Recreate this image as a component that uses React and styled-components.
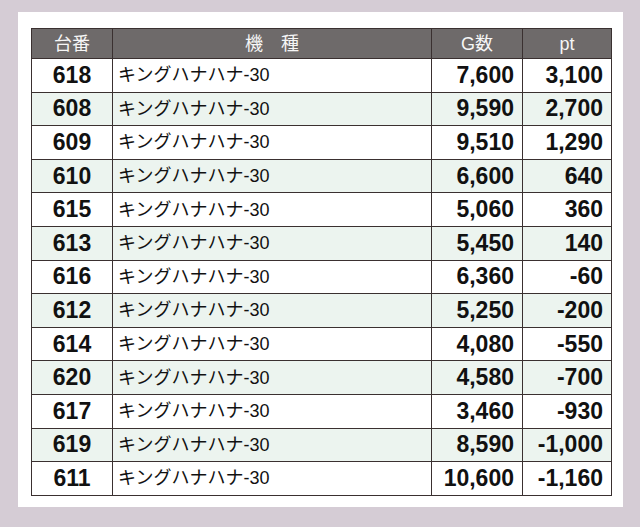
import styled, { createGlobalStyle } from 'styled-components';

const GlobalStyle = createGlobalStyle`
  html, body {
    margin: 0;
    padding: 0;
    background: #d5ccd5;
  }
  body {
    font-family: "Liberation Sans", "Noto Sans CJK JP", sans-serif;
  }
`

const Page = styled.div`
  width: 640px;
  height: 527px;
  padding: 12px 0 0 18px;
  box-sizing: border-box;
`

const Panel = styled.div`
  width: 605px;
  height: 495px;
  background: #ffffff;
  padding: 16px 12px 0 13px;
  box-sizing: border-box;
`

const Table = styled.table`
  width: 580px;
  border-collapse: collapse;
  table-layout: fixed;
  border: 1px solid #3a3030;
`

const HeadCell = styled.th`
  height: 29px;
  padding: 0;
  background: #6e6a6a;
  color: #f6f6f6;
  font-weight: normal;
  font-size: 18px;
  font-family: "Liberation Sans", "Noto Sans CJK JP", sans-serif;
  text-align: center;
  border: 1px solid #3a3030;
  line-height: 1;
`

const Row = styled.tr`
  height: 33.6px;
  background: ${p => (p.$alt ? '#ecf4ef' : '#ffffff')};
`

const Cell = styled.td`
  padding: 0 ${p => (p.$align === 'right' ? '8px' : '5px')};
  border: 1px solid #3a3030;
  text-align: ${p => p.$align || 'left'};
  font-size: ${p => (p.$bold ? '23px' : '18px')};
  font-weight: ${p => (p.$bold ? 'bold' : 'normal')};
  color: #111111;
  line-height: 1;
  white-space: nowrap;
`

const rows = [
  ['618', '7,600', '3,100'],
  ['608', '9,590', '2,700'],
  ['609', '9,510', '1,290'],
  ['610', '6,600', '640'],
  ['615', '5,060', '360'],
  ['613', '5,450', '140'],
  ['616', '6,360', '-60'],
  ['612', '5,250', '-200'],
  ['614', '4,080', '-550'],
  ['620', '4,580', '-700'],
  ['617', '3,460', '-930'],
  ['619', '8,590', '-1,000'],
  ['611', '10,600', '-1,160'],
]

function App() {
  return (
    <>
      <GlobalStyle />
      <Page>
        <Panel>
          <Table>
            <colgroup>
              <col style={{ width: '81px' }} />
              <col style={{ width: '319px' }} />
              <col style={{ width: '91px' }} />
              <col style={{ width: '89px' }} />
            </colgroup>
            <thead>
              <tr>
                <HeadCell>台番</HeadCell>
                <HeadCell>機　種</HeadCell>
                <HeadCell>G数</HeadCell>
                <HeadCell>pt</HeadCell>
              </tr>
            </thead>
            <tbody>
              {rows.map((r, i) => (
                <Row key={r[0]} $alt={i % 2 === 1}>
                  <Cell $bold $align="center">{r[0]}</Cell>
                  <Cell>キングハナハナ-30</Cell>
                  <Cell $bold $align="right">{r[1]}</Cell>
                  <Cell $bold $align="right">{r[2]}</Cell>
                </Row>
              ))}
            </tbody>
          </Table>
        </Panel>
      </Page>
    </>
  );
}

export default App;
